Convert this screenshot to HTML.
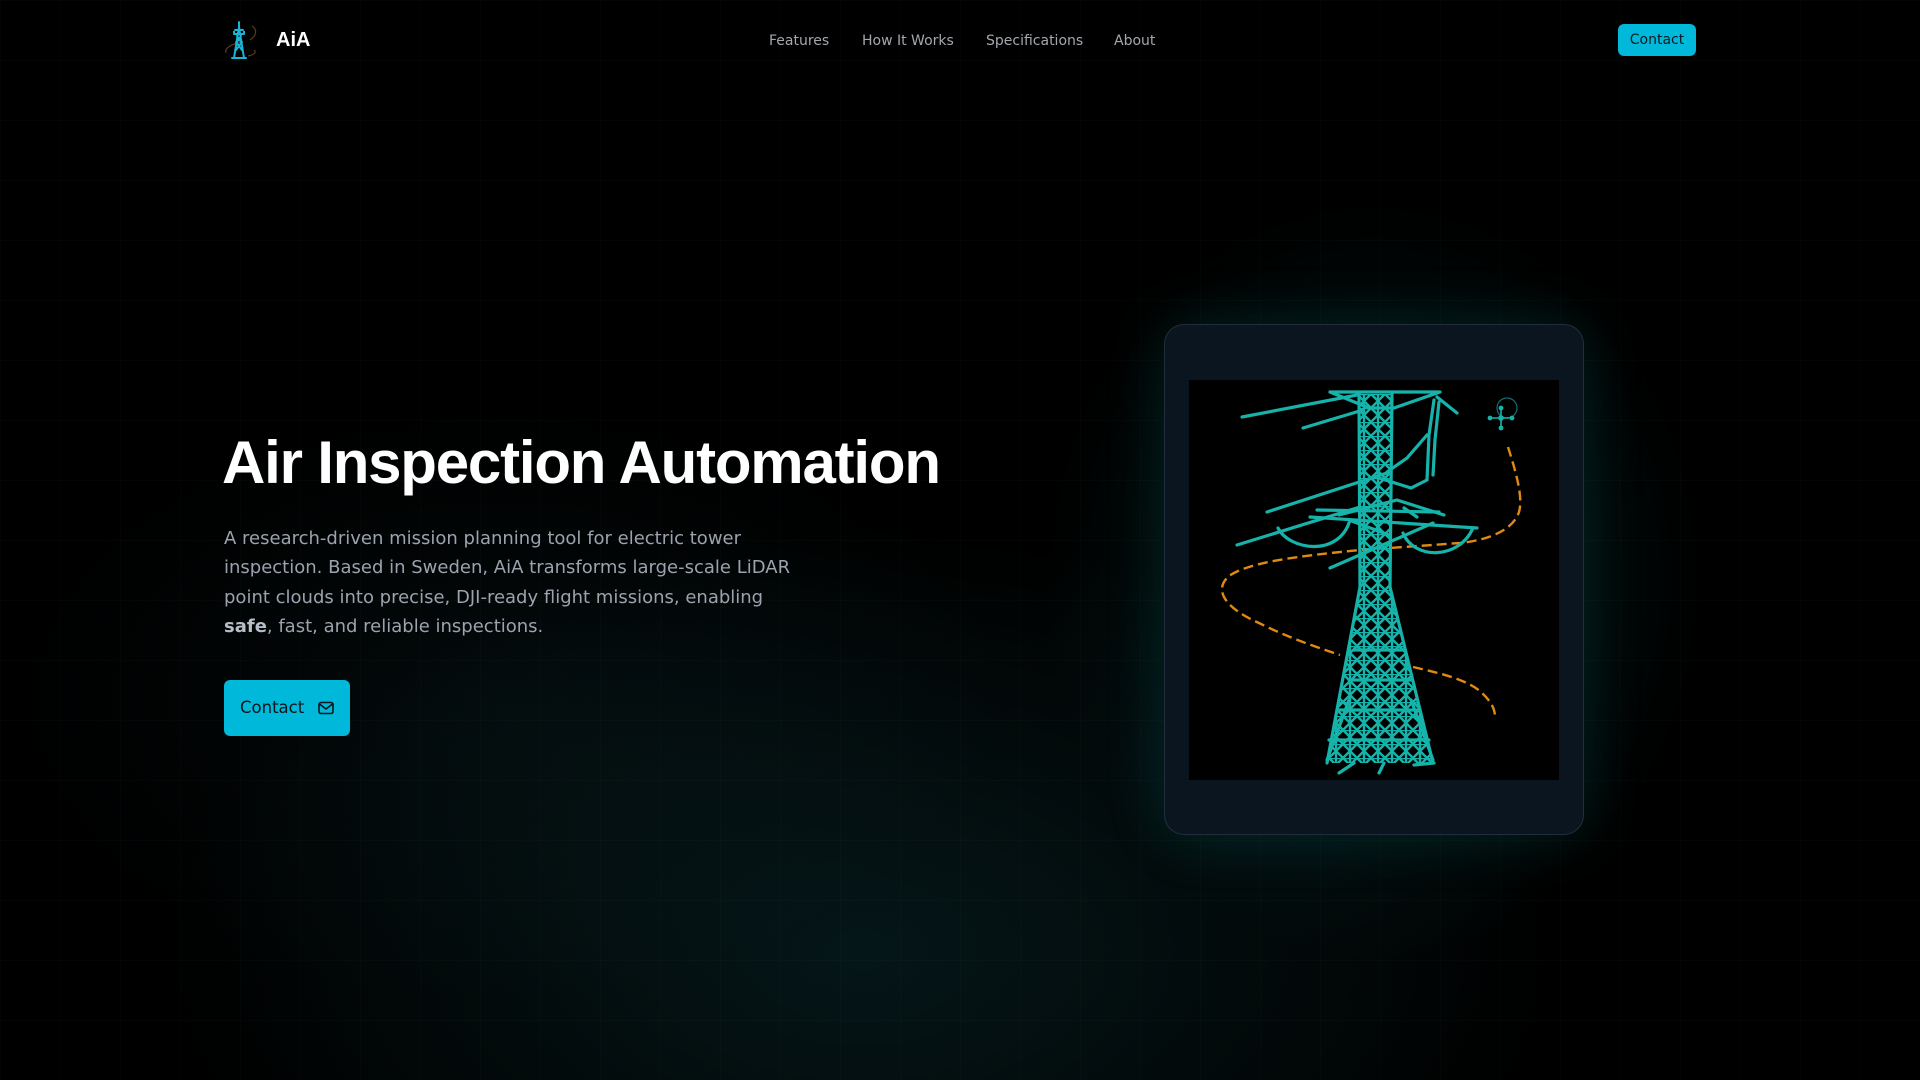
<!DOCTYPE html>
<html><head><meta charset="utf-8">
<style>
*{margin:0;padding:0;box-sizing:border-box}
html,body{width:1920px;height:1080px;overflow:hidden;background:#000}
body{position:relative;font-family:"DejaVu Sans","Liberation Sans",sans-serif;
background:
radial-gradient(ellipse 330px 380px at 1374px 580px, rgba(20,120,120,0.22), rgba(0,0,0,0) 100%),
radial-gradient(ellipse 700px 420px at 860px 950px, rgba(16,70,75,0.32), rgba(0,0,0,0) 100%),
radial-gradient(ellipse 500px 300px at 500px 700px, rgba(14,45,50,0.2), rgba(0,0,0,0) 100%),
#000;}
.grid{position:absolute;inset:0;background-image:linear-gradient(to right,rgba(255,255,255,0.015) 1px,transparent 1px),linear-gradient(to bottom,rgba(255,255,255,0.015) 1px,transparent 1px);background-size:60px 60px;background-position:0 0}
.logo{position:absolute;left:224px;top:20px}
.brand{position:absolute;left:276px;top:29px;color:#fff;font:bold 20px "Liberation Sans",sans-serif;letter-spacing:0}
.nav{position:absolute;top:33px;font-size:14px;color:#a3a7ae}
.btn-s{position:absolute;left:1618px;top:24px;width:78px;height:32px;background:#00b8d9;border-radius:6px;color:#0a1a22;font-size:14px;text-align:center;line-height:32px}
h1{position:absolute;left:222px;top:430px;font:bold 60px/66px "Liberation Sans",sans-serif;color:#fff;letter-spacing:-1.2px;white-space:nowrap}
p{position:absolute;left:224px;top:524px;width:580px;font-size:18px;line-height:29.25px;color:#9ca3af}
p b{color:#b8bec7}
.btn{position:absolute;left:224px;top:680px;width:126px;height:56px;background:#00b8d9;border-radius:6px;color:#07151c;font-size:16.5px;line-height:56px;padding-left:16px}
.btn svg{position:absolute;left:94px;top:21px}
.card{position:absolute;left:1164px;top:324px;width:420px;height:511px;background:#0b1520;border:1px solid rgba(120,160,180,0.18);border-radius:20px;box-shadow:0 0 60px rgba(20,160,160,0.18)}
.img{position:absolute;left:24px;top:55px;width:370px;height:400px;background:#000}
</style></head><body>
<div class="grid"></div>
<svg class="logo" width="38" height="40" viewBox="0 0 38 40">
<path d="M2 33 C0 28 8 24 18 22 M28 6 C34 10 32 16 26 20 M24 36 C30 35 33 32 30 30" stroke="#5a3a20" stroke-width="1.2" fill="none"/>
<g stroke="#19b4d6" stroke-width="2" fill="none" stroke-linecap="round">
<path d="M15 2 L15 7 M10 38 L15 7 L20 38 M8 38 L22 38 M11 10 L19 10 M10 14 L20 14 M12 22 L18 30 M18 22 L12 30 M13 16 L17 22 M17 16 L13 22"/>
</g>
<g fill="#19b4d6"><rect x="9" y="11" width="2" height="3"/><rect x="19" y="11" width="2" height="3"/></g>
</svg>
<div class="brand">AiA</div>
<div class="nav" style="left:769px">Features</div>
<div class="nav" style="left:862px">How It Works</div>
<div class="nav" style="left:986px">Specifications</div>
<div class="nav" style="left:1114px">About</div>
<div class="btn-s">Contact</div>
<h1>Air Inspection Automation</h1>
<p>A research-driven mission planning tool for electric tower inspection. Based in Sweden, AiA transforms large-scale LiDAR point clouds into precise, DJI-ready flight missions, enabling <b>safe</b>, fast, and reliable inspections.</p>
<div class="btn">Contact<svg width="16" height="14" viewBox="0 0 16 14"><rect x="1" y="1.5" width="14" height="11" rx="2" fill="none" stroke="#07151c" stroke-width="1.6"/><path d="M1.5 3 L8 8 L14.5 3" fill="none" stroke="#07151c" stroke-width="1.6"/></svg></div>
<div class="card"><div class="img">
<svg width="370" height="400" viewBox="0 0 370 400">
<defs>
<pattern id="lat" width="14" height="14" patternUnits="userSpaceOnUse">
<path d="M0 0 L14 14 M14 0 L0 14 M0 0 L14 0 M7 0 L7 14" stroke="#16b3ab" stroke-width="2.4"/>
</pattern>
<clipPath id="tw"><path d="M170 14 L203 14 L201 207 L244 383 L138 383 L171 207 Z"/></clipPath>
</defs>
<path d="M319 67 C328 95 334 118 330 132 C324 150 300 160 271 163 C230 166 200 168 171 170 C110 176 60 182 40 196 C24 210 36 228 70 243 C100 258 130 268 151 275" stroke="#e08a10" stroke-width="2.4" fill="none" stroke-dasharray="10 5"/>
<path d="M224 287 C255 294 278 300 292 312 C303 322 306 330 306 337" stroke="#e08a10" stroke-width="2.4" fill="none" stroke-dasharray="10 5"/>
<rect x="130" y="10" width="130" height="380" fill="url(#lat)" clip-path="url(#tw)"/>
<g stroke="#16b3ab" stroke-width="3.2" fill="none" stroke-linecap="round">
<path d="M170 14 L171 207 L138 383 M203 14 L201 207 L244 383"/>
<path d="M141 12 L251 12 M141 12 L180 28 L205 28 L251 12"/>
<path d="M53 37 L168 15 M114 48 L174 30 M248 17 L268 33"/>
<path d="M121 137 L288 148 M128 130 L250 132"/>
<path d="M78 132 L201 92 M48 165 L171 127 M141 188 L244 143"/>
<path d="M89 148 C100 170 150 178 161 140 M214 153 C225 180 270 180 284 148"/>
<path d="M245 20 L240 55 L238 100 L222 108 L190 98 M250 22 L246 60 L244 95 M238 55 L218 78 L198 92"/>
<path d="M150 135 L208 120 L255 135 M160 140 L200 155 M215 128 L228 137"/>
<path d="M150 393 L165 383 M190 393 L195 383 M225 385 L245 383 M138 380 L160 320 M244 380 L222 320 M140 360 L240 360 M150 330 L230 330 M160 300 L222 300 M165 270 L215 270"/>
</g>
<g stroke="#16b3ab" stroke-width="1.6" fill="#16b3ab">
<circle cx="318" cy="28" r="10" fill="none" stroke="#1a6a78" stroke-width="1.2"/>
<path d="M301 38 L323 38 M312 28 L312 48"/>
<circle cx="312" cy="38" r="2"/><circle cx="301" cy="38" r="1.6"/><circle cx="323" cy="38" r="1.6"/><circle cx="312" cy="28" r="1.6"/><circle cx="312" cy="48" r="1.6"/>
</g>
</svg>
</div></div>
</body></html>
